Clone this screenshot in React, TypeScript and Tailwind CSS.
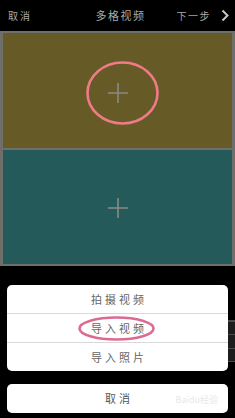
import React from 'react'

function Plus() {
  return (
    <svg width="22" height="22" viewBox="0 0 22 22" className="block">
      <path d="M11 1v20M1 11h20" stroke="#8a8a86" strokeWidth="1.6" fill="none" />
    </svg>
  )
}

function Ring({ className, color, w, h }: { className: string; color: string; w: number; h: number }) {
  return (
    <svg width={w} height={h} viewBox={`0 0 ${w} ${h}`} className={className}>
      <ellipse cx={w / 2} cy={h / 2} rx={w / 2 - 1.5} ry={h / 2 - 1.5} stroke={color} strokeWidth="2.6" fill="none" />
    </svg>
  )
}

export default function App() {
  const sheetItems = ['拍摄视频', '导入视频', '导入照片']

  return (
    <div className="relative flex h-[418px] w-[235px] flex-col overflow-hidden bg-black font-['Noto_Sans_CJK_SC',sans-serif]">
      {/* Top bar */}
      <div className="grid h-[31px] grid-cols-[1fr_auto_1fr] items-center pl-[8px] pr-[5px] text-[#a9a9a9]">
        <span className="text-[10px] tracking-[2px]">取消</span>
        <span className="pl-[3px] text-[11px] tracking-[1.5px]">多格视频</span>
        <div className="flex items-center justify-end gap-[10px]">
          <span className="text-[10px] tracking-[1.5px]">下一步</span>
          <svg width="9" height="13" viewBox="0 0 9 13">
            <path d="M1.5 1.5l5 5-5 5" stroke="#c8c8c8" strokeWidth="2" fill="none" />
          </svg>
        </div>
      </div>

      {/* Grid frame */}
      <div className="flex flex-col gap-[2px] bg-[#6e6e6a] px-[3px] py-[2px]">
        <div className="relative flex h-[115px] items-center justify-center bg-[#665a27] pt-[4px]">
          <Plus />
          <Ring className="absolute left-[83px] top-[28px]" color="#ef7b88" w={73} h={64} />
        </div>
        <div className="flex h-[114px] items-center justify-center bg-[#245b5a] pt-[2px]">
          <Plus />
        </div>
      </div>

      {/* Toolbar behind the sheet */}
      <div className="ml-[200px] mt-[54px] flex flex-col bg-[#1d1d1d]">
        <div className="h-[14px] border-t-2 border-[#4a4a4a]" />
        <div className="h-[14px] border-t border-[#4a4a4a]" />
        <div className="h-[14px] border-y border-[#4a4a4a]" />
      </div>

      {/* Action sheet */}
      <div className="absolute left-[7px] right-[7px] top-[285px] flex flex-col gap-[13px]">
        <div className="relative flex flex-col rounded-[5px] bg-white">
          {sheetItems.map((item, i) => (
            <div
              key={item}
              className={
                i === 0
                  ? 'flex h-[28px] items-center justify-center pl-[3px] text-[11px] tracking-[3px] text-[#666]'
                  : 'flex h-[29px] items-center justify-center border-t border-[#d9d9d9] pl-[3px] text-[11px] tracking-[3px] text-[#666]'
              }
            >
              {item}
            </div>
          ))}
          <Ring className="absolute left-[71px] top-[31px]" color="#dc6a93" w={77} h={25} />
        </div>
        <div className="relative flex h-[29px] items-center justify-center rounded-[5px] bg-white pl-[3px] text-[11px] tracking-[3px] text-[#555]">
          取消
          <span className="absolute right-[10px] top-[9px] text-[9px] tracking-normal text-[#e8e8e8]">Baidu经验</span>
        </div>
      </div>
    </div>
  )
}
